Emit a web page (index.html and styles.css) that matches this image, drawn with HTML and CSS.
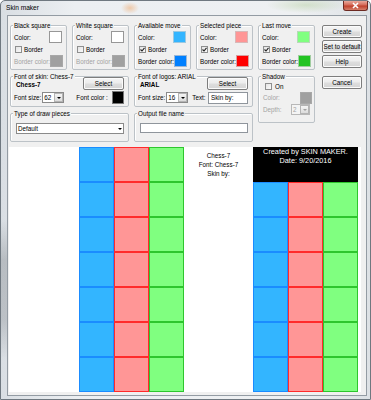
FILE: index.html
```html
<!DOCTYPE html>
<html lang="en">
<head>
  <meta charset="UTF-8" />
  <meta name="viewport" content="width=device-width, initial-scale=1.0" />
  <title>Skin maker</title>
  <link rel="stylesheet" href="styles.css">
</head>
<body>
  <div class="window">
    <!-- Title bar -->
    <div class="titlebar">
      <span class="title">Skin maker</span>
      <span class="close">
        <svg width="9" height="7" viewBox="0 0 9 7"><path d="M2 1 L7 6 M7 1 L2 6" stroke="#fff" stroke-width="1.6"/></svg>
      </span>
    </div>

    <div class="client">
      <!-- Settings -->
      <div class="settings">
        <div class="group sq">
          <span class="group-title">Black square</span>
          <div class="row"><span>Color:</span><span class="sw sw-white"></span></div>
          <div class="row start"><span class="check"></span><span>Border</span></div>
          <div class="row"><span class="dis">Border color:</span><span class="sw sw-gray"></span></div>
        </div>
        <div class="group sq">
          <span class="group-title">White square</span>
          <div class="row"><span>Color:</span><span class="sw sw-white"></span></div>
          <div class="row start"><span class="check"></span><span>Border</span></div>
          <div class="row"><span class="dis">Border color:</span><span class="sw sw-gray"></span></div>
        </div>
        <div class="group sq">
          <span class="group-title">Available move</span>
          <div class="row"><span>Color:</span><span class="sw sw-lblue"></span></div>
          <div class="row start"><span class="check on"><svg width="5" height="5" viewBox="0 0 5 5"><path d="M0.5 2.5 L2 4 L4.5 0.8" fill="none" stroke="#222" stroke-width="1.1"/></svg></span><span>Border</span></div>
          <div class="row"><span>Border color:</span><span class="sw sw-blue"></span></div>
        </div>
        <div class="group sq">
          <span class="group-title">Selected piece</span>
          <div class="row"><span>Color:</span><span class="sw sw-pink"></span></div>
          <div class="row start"><span class="check on"><svg width="5" height="5" viewBox="0 0 5 5"><path d="M0.5 2.5 L2 4 L4.5 0.8" fill="none" stroke="#222" stroke-width="1.1"/></svg></span><span>Border</span></div>
          <div class="row"><span>Border color:</span><span class="sw sw-red"></span></div>
        </div>
        <div class="group sq">
          <span class="group-title">Last move</span>
          <div class="row"><span>Color:</span><span class="sw sw-lgreen"></span></div>
          <div class="row start"><span class="check on"><svg width="5" height="5" viewBox="0 0 5 5"><path d="M0.5 2.5 L2 4 L4.5 0.8" fill="none" stroke="#222" stroke-width="1.1"/></svg></span><span>Border</span></div>
          <div class="row"><span>Border color:</span><span class="sw sw-green"></span></div>
        </div>
        <div class="buttons">
          <button class="btn">Create</button>
          <button class="btn">Set to default</button>
          <button class="btn">Help</button>
        </div>

        <div class="group font-box skin-font">
          <span class="group-title">Font of skin: Chess-7</span>
          <div class="row top">
            <span class="font-name">Chess-7</span>
            <button class="btn select">Select</button>
          </div>
          <div class="row">
            <span>Font size:</span>
            <span class="combo size"><span class="val">62</span><span class="arrow"></span></span>
            <span class="font-color">Font color :</span>
            <span class="sw sw-black"></span>
          </div>
        </div>
        <div class="group font-box logo-font">
          <span class="group-title">Font of logos: ARIAL</span>
          <div class="row top">
            <span class="font-name">ARIAL</span>
            <button class="btn select">Select</button>
          </div>
          <div class="row">
            <span>Font size:</span>
            <span class="combo size"><span class="val">16</span><span class="arrow"></span></span>
            <span class="text-label">Text:</span>
            <span class="field text-field">Skin by:</span>
          </div>
        </div>
        <div class="group shadow">
          <span class="group-title">Shadow</span>
          <div class="row start on-row"><span class="check"></span><span>On</span></div>
          <div class="row color-row"><span class="dis">Color:</span><span class="sw sw-gray"></span></div>
          <div class="row depth-row"><span class="dis">Depth:</span><span class="combo depth disabled"><span class="val">2</span><span class="arrow"></span></span></div>
        </div>
        <div class="buttons cancel">
          <button class="btn">Cancel</button>
        </div>

        <div class="group low draw-type">
          <span class="group-title">Type of draw pieces</span>
          <span class="combo full"><span class="val">Default</span><span class="arrow"></span></span>
        </div>
        <div class="group low out-file">
          <span class="group-title">Output file name</span>
          <span class="field full"></span>
        </div>
      </div>

      <!-- Preview -->
      <div class="preview">
        <div class="board first">
          <span class="cell c-blue"></span><span class="cell c-red"></span><span class="cell c-green"></span>
          <span class="cell c-blue"></span><span class="cell c-red"></span><span class="cell c-green"></span>
          <span class="cell c-blue"></span><span class="cell c-red"></span><span class="cell c-green"></span>
          <span class="cell c-blue"></span><span class="cell c-red"></span><span class="cell c-green"></span>
          <span class="cell c-blue"></span><span class="cell c-red"></span><span class="cell c-green"></span>
          <span class="cell c-blue"></span><span class="cell c-red"></span><span class="cell c-green"></span>
          <span class="cell c-blue"></span><span class="cell c-red"></span><span class="cell c-green"></span>
        </div>
        <div class="caption">
          <div>Chess-7</div>
          <div>Font: Chess-7</div>
          <div>Skin by:</div>
        </div>
        <div class="board">
          <div class="logo">
            <div>Created by SKIN MAKER.</div>
            <div>Date: 9/20/2016</div>
          </div>
          <span class="cell c-blue"></span><span class="cell c-red"></span><span class="cell c-green"></span>
          <span class="cell c-blue"></span><span class="cell c-red"></span><span class="cell c-green"></span>
          <span class="cell c-blue"></span><span class="cell c-red"></span><span class="cell c-green"></span>
          <span class="cell c-blue"></span><span class="cell c-red"></span><span class="cell c-green"></span>
          <span class="cell c-blue"></span><span class="cell c-red"></span><span class="cell c-green"></span>
          <span class="cell c-blue"></span><span class="cell c-red"></span><span class="cell c-green"></span>
        </div>
      </div>
    </div>
  </div>
</body>
</html>
```

FILE: styles.css
```css
/* Global styles */
body {
  margin: 0;
  font-family: "Liberation Sans", Arial, sans-serif;
  font-size: 6.3px;
  color: #000;
  background: #fff;
  white-space: nowrap;
}
/* Window frame */
.window {
  width: 371px;
  height: 400px;
  box-sizing: border-box;
  border: 1px solid #6f7880;
  border-radius: 5px 5px 0 0;
  padding: 0 3px 3px 6px;
  background:
    linear-gradient(180deg, transparent 55%, rgba(120, 125, 130, 0.35) 65%, rgba(120, 125, 130, 0.3) 80%, transparent 90%) left / 6px 100% no-repeat,
    linear-gradient(90deg, #d9dee3, #eceff2 20%, #eef0f2 80%, #dde1e5);
}
.titlebar {
  height: 14px;
  margin-left: -1px;
  display: flex;
  justify-content: space-between;
  background:
    radial-gradient(ellipse 9px 6px at 124px 7px, rgba(240, 170, 110, 0.55), transparent),
    radial-gradient(ellipse 40px 8px at 300px 4px, rgba(160, 195, 130, 0.35), transparent);
}
.title {
  font-size: 6.6px;
  line-height: 14px;
}
.close {
  width: 25px;
  height: 10px;
  margin-right: -1px;
  box-sizing: border-box;
  border: 1px solid #6d2a22;
  border-top: none;
  border-radius: 0 0 3px 3px;
  background: linear-gradient(#e9a99b, #d46a58 45%, #c0402c 55%, #d5806c);
  display: flex;
  align-items: center;
  justify-content: center;
}
.client {
  height: 381px;
  box-sizing: border-box;
  border: 1px solid #939ba3;
  background: #f0f0f0;
}
/* Settings area */
.settings {
  display: grid;
  grid-template-columns: repeat(5, 57px) 42px;
  grid-template-rows: 45px 31px 29px;
  column-gap: 5px;
  row-gap: 6px;
  padding: 9px 0 0 2px;
}
.skin-font { grid-column: 1 / 3; grid-row: 2; }
.logo-font { grid-column: 3 / 5; grid-row: 2; }
.draw-type { grid-column: 1 / 3; grid-row: 3; }
.out-file { grid-column: 3 / 5; grid-row: 3; }
.cancel { grid-column: 6; grid-row: 2; }
.group {
  position: relative;
  border: 1px solid #bcc2c7;
  border-radius: 2px;
  box-shadow: inset 1px 1px #fff;
}
.group-title {
  position: absolute;
  top: -5px;
  left: 2px;
  padding: 0 1px;
  line-height: 9px;
  background: #f0f0f0;
}
.row {
  display: flex;
  align-items: center;
  justify-content: space-between;
}
.row.start {
  justify-content: flex-start;
}
.sq {
  padding: 5px 4px 2px 3px;
}
.sq .row {
  height: 12px;
}
.sq .check {
  margin: 0 2px 0 1px;
}
.dis {
  color: #a3a3a3;
}
/* Colour swatches */
.sw {
  flex: none;
  width: 13px;
  height: 12px;
  box-sizing: border-box;
  border: 1px solid #979797;
}
.sw-white { background: #fff; }
.sw-gray { background: #a0a0a0; border-color: #a8a8a8; }
.sw-lblue { background: #33b5ff; border-color: #9cc8e0; }
.sw-blue { background: #0080ff; border-color: #9cb8d6; }
.sw-pink { background: #ff9696; border-color: #d8b8b8; }
.sw-red { background: #ff0000; border-color: #d8a0a0; }
.sw-lgreen { background: #80ff80; border-color: #b8d8b8; }
.sw-green { background: #22c322; border-color: #a0cca0; }
.sw-black { background: #000; border-color: #777; width: 12px; }
/* Checkbox */
.check {
  flex: none;
  width: 7px;
  height: 7px;
  box-sizing: border-box;
  border: 1px solid #8e8f8f;
  background: linear-gradient(135deg, #e4e4e4, #fafafa);
  display: flex;
  align-items: center;
  justify-content: center;
}
/* Buttons */
.buttons {
  display: flex;
  flex-direction: column;
  gap: 2px;
  padding-left: 2px;
}
.btn {
  height: 13px;
  padding: 0;
  box-sizing: border-box;
  border: 1px solid #7d7d7d;
  border-radius: 2px;
  background: linear-gradient(#f5f5f5, #ececec 48%, #dedede 52%, #d4d4d4);
  box-shadow: inset 0 0 0 1px #fbfbfb;
  font: inherit;
  color: #000;
}
/* Font boxes */
.font-box {
  padding: 0 4px 2px 3px;
}
.font-box .row {
  height: 13px;
}
.font-box .row.top {
  height: 14px;
  align-items: flex-start;
}
.font-name {
  font-weight: bold;
  margin: 4px 0 0 2px;
}
.select {
  width: 41px;
}
.font-color {
  margin-left: 12px;
}
.font-box .sw-black {
  margin-left: auto;
  height: 13px;
}
.text-label {
  margin-left: 4px;
}
.text-field {
  margin-left: auto;
  width: 40px;
  height: 12px;
}
/* Combo boxes and fields */
.combo {
  flex: none;
  display: flex;
  height: 11px;
  box-sizing: border-box;
  border: 1px solid #8a8a8a;
  background: #fff;
}
.combo .val {
  flex: 1;
  padding-left: 1px;
  line-height: 9px;
}
.combo .arrow {
  width: 7px;
  border: 1px solid #b4b4b4;
  background: linear-gradient(#f4f4f4, #dcdcdc);
  display: flex;
  align-items: center;
  justify-content: center;
}
.combo .arrow::after {
  content: "";
  border-left: 2px solid transparent;
  border-right: 2px solid transparent;
  border-top: 2px solid #000;
}
.combo.size {
  width: 22px;
  margin-left: 1px;
}
.combo.disabled {
  border-color: #b8b8b8;
  background: #f4f4f4;
  color: #a3a3a3;
}
.combo.disabled .arrow::after {
  border-top-color: #a0a0a0;
}
.combo.depth {
  width: 19px;
}
.combo.full .arrow {
  border: none;
  background: #fff;
}
.field {
  display: block;
  box-sizing: border-box;
  border: 1px solid #8f959c;
  background: #fff;
  padding-left: 2px;
  line-height: 10px;
}
.full {
  width: 108px;
}
.low {
  padding: 9px 4px 7px 5px;
}
.low .field {
  height: 10px;
}
/* Shadow box */
.shadow {
  grid-column: 5;
  grid-row: 2 / 4;
  align-self: start;
  height: 47px;
  box-sizing: border-box;
  padding: 4px 2px 7px 4px;
}
.on-row {
  height: 10px;
}
.on-row .check {
  margin: 0 3px 0 2px;
}
.color-row {
  height: 13px;
}
.color-row .sw {
  width: 12px;
}
.depth-row {
  height: 11px;
  padding-right: 2px;
}
/* Preview */
.preview {
  margin: 5px 0 0 1px;
  width: 352px;
  height: 245px;
  background: #fff;
  display: flex;
}
.board {
  display: grid;
  grid-template-columns: repeat(3, 35px);
  grid-auto-rows: 35px;
  align-content: start;
}
.board.first {
  margin-left: 70px;
}
.cell {
  box-sizing: border-box;
  border: 1px solid;
}
.c-blue { background: #33b5ff; border-color: #1a8cff; }
.c-red { background: #ff9696; border-color: #ff2b2b; }
.c-green { background: #80ff80; border-color: #2ec62e; }
.caption {
  width: 69px;
  padding-top: 4px;
  text-align: center;
  font-size: 6.3px;
  line-height: 9px;
}
.logo {
  grid-column: 1 / 4;
  background: #000;
  color: #fff;
  text-align: center;
  font-size: 7.3px;
  line-height: 9px;
}
```
